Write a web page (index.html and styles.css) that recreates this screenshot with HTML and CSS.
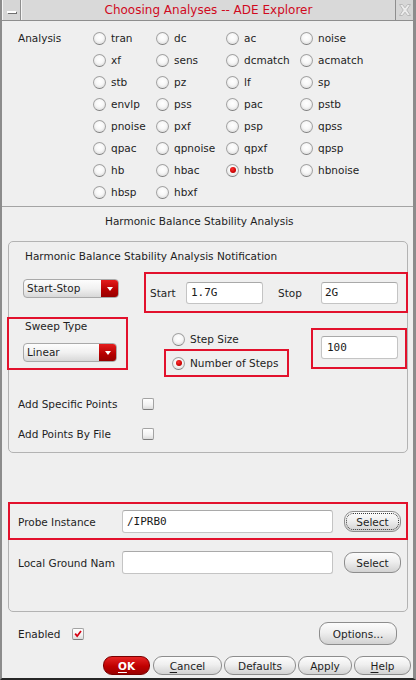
FILE: index.html
```html
<!DOCTYPE html>
<html>
<head>
<meta charset="utf-8">
<title>Choosing Analyses -- ADE Explorer</title>
<link rel="stylesheet" href="styles.css">
</head>
<body>
<div class="window">
  <div class="titlebar">
    <div class="tb-btn tb-min"><span class="min-glyph"></span></div>
    <div class="tb-title">Choosing Analyses -- ADE Explorer</div>
    <div class="tb-btn tb-close">
      <svg width="12" height="12" viewBox="0 0 12 12"><polygon points="0.5,0.5 3.5,0.5 6,3.8 8.5,0.5 11.5,0.5 7.8,6 11.5,11.5 8.5,11.5 6,8.2 3.5,11.5 0.5,11.5 4.2,6" fill="#ececec" stroke="#b9b9b9" stroke-width="1"/></svg>
    </div>
  </div>

  <div class="analysis">
    <div class="an-label">Analysis</div>
    <div class="an-grid">
      <div class="opt"><span class="radio"></span>tran</div>
      <div class="opt"><span class="radio"></span>dc</div>
      <div class="opt"><span class="radio"></span>ac</div>
      <div class="opt"><span class="radio"></span>noise</div>
      <div class="opt"><span class="radio"></span>xf</div>
      <div class="opt"><span class="radio"></span>sens</div>
      <div class="opt"><span class="radio"></span>dcmatch</div>
      <div class="opt"><span class="radio"></span>acmatch</div>
      <div class="opt"><span class="radio"></span>stb</div>
      <div class="opt"><span class="radio"></span>pz</div>
      <div class="opt"><span class="radio"></span>lf</div>
      <div class="opt"><span class="radio"></span>sp</div>
      <div class="opt"><span class="radio"></span>envlp</div>
      <div class="opt"><span class="radio"></span>pss</div>
      <div class="opt"><span class="radio"></span>pac</div>
      <div class="opt"><span class="radio"></span>pstb</div>
      <div class="opt"><span class="radio"></span>pnoise</div>
      <div class="opt"><span class="radio"></span>pxf</div>
      <div class="opt"><span class="radio"></span>psp</div>
      <div class="opt"><span class="radio"></span>qpss</div>
      <div class="opt"><span class="radio"></span>qpac</div>
      <div class="opt"><span class="radio"></span>qpnoise</div>
      <div class="opt"><span class="radio"></span>qpxf</div>
      <div class="opt"><span class="radio"></span>qpsp</div>
      <div class="opt"><span class="radio"></span>hb</div>
      <div class="opt"><span class="radio"></span>hbac</div>
      <div class="opt"><span class="radio on"></span>hbstb</div>
      <div class="opt"><span class="radio"></span>hbnoise</div>
      <div class="opt"><span class="radio"></span>hbsp</div>
      <div class="opt"><span class="radio"></span>hbxf</div>
    </div>
  </div>

  <div class="sep"></div>
  <div class="heading">Harmonic Balance Stability Analysis</div>

  <div class="group group1">
    <div class="g-title">Harmonic Balance Stability Analysis Notification</div>
    <div class="row-range">
      <div class="dropdown dd-range"><span class="dd-text">Start-Stop</span><span class="dd-arrow"></span></div>
      <div class="hl hl-range">
        <span class="lbl-start">Start</span>
        <div class="field f-start">1.7G</div>
        <span class="lbl-stop">Stop</span>
        <div class="field f-stop">2G</div>
      </div>
    </div>
    <div class="row-sweep">
      <div class="hl hl-sweep">
        <div class="sweep-label">Sweep Type</div>
        <div class="dropdown dd-sweep"><span class="dd-text">Linear</span><span class="dd-arrow"></span></div>
      </div>
      <div class="step-col">
        <div class="opt step-size"><span class="radio"></span>Step Size</div>
        <div class="hl hl-nsteps"><div class="opt"><span class="radio on"></span>Number of Steps</div></div>
      </div>
      <div class="hl hl-steps"><div class="field f-steps">100</div></div>
    </div>
    <div class="check-row cr1"><span class="chk-label">Add Specific Points</span><span class="checkbox"></span></div>
    <div class="check-row cr2"><span class="chk-label">Add Points By File</span><span class="checkbox"></span></div>
  </div>

  <div class="group group2">
    <div class="hl probe-row">
      <span class="inst-label">Probe Instance</span>
      <div class="field f-inst">/IPRB0</div>
      <div class="btn btn-select focus">Select</div>
    </div>
    <div class="ground-row">
      <span class="inst-label">Local Ground Nam</span>
      <div class="field f-inst"></div>
      <div class="btn btn-select">Select</div>
    </div>
  </div>

  <div class="enabled-row">
    <span class="en-label">Enabled</span>
    <span class="checkbox checked"><svg width="12" height="12" viewBox="0 0 12 12"><path d="M2.6 5.6 L5 8.6 L9.6 2.4" fill="none" stroke="#d40012" stroke-width="2.1" stroke-linejoin="miter"/></svg></span>
    <div class="btn btn-options">Options...</div>
  </div>

  <div class="button-row">
    <div class="btn b-ok"><u>O</u>K</div>
    <div class="btn b-cancel"><u>C</u>ancel</div>
    <div class="btn b-defaults">Defaults</div>
    <div class="btn b-apply">Apply</div>
    <div class="btn b-help"><u>H</u>elp</div>
  </div>
</div>
</body>
</html>
```

FILE: styles.css
```css
* { box-sizing: border-box; }
html, body { margin: 0; padding: 0; }
body {
  width: 416px;
  height: 680px;
  overflow: hidden;
  background: #efefef;
  font-family: "DejaVu Sans", sans-serif;
  font-size: 10.5px;
  color: #1e1e1e;
}
.window {
  width: 416px;
  height: 680px;
  border-left: 2px solid #8c8c8c;
  border-right: 3px solid #8c8c8c;
  border-bottom: 2px solid #262626;
  background: #efefef;
  display: flex;
  flex-direction: column;
}

/* title bar */
.titlebar {
  flex: none;
  height: 21px;
  display: flex;
  background: #d9d9d9;
  border-bottom: 1px solid #8e8e8e;
}
.tb-btn {
  flex: none;
  width: 19px;
  height: 20px;
  display: flex;
  align-items: center;
  justify-content: center;
  background: #d6d6d6;
}
.tb-min { border-left: 1px solid #f6f6f6; border-right: 1px solid #8e8e8e; }
.tb-close { border-left: 1px solid #8e8e8e; width: 18px; }
.min-glyph {
  width: 9px;
  height: 2px;
  margin-top: 3px;
  background: #ffffff;
  box-shadow: 1px 1px 0 #6f6f6f;
}
.tb-title {
  flex: 1;
  text-align: center;
  color: #d0091e;
  font-size: 12px;
  line-height: 20px;
  border-left: 1px solid #f4f4f4;
}

/* analysis radio grid */
.analysis {
  flex: none;
  height: 185px;
  display: flex;
  padding: 6px 0 0 16px;
}
.an-label {
  width: 75px;
  height: 22px;
  display: flex;
  align-items: center;
}
.an-grid {
  display: grid;
  grid-template-columns: 63px 70px 74px 1fr;
  grid-auto-rows: 22px;
}
.opt {
  display: flex;
  align-items: center;
  gap: 5px;
  white-space: nowrap;
}
.radio {
  flex: none;
  width: 13px;
  height: 13px;
  border-radius: 50%;
  border: 1px solid #a2a2a2;
  border-bottom-color: #7e7e7e;
  background: radial-gradient(circle at 50% 40%, #ffffff 0%, #f7f7f7 45%, #cfcfcf 100%);
  display: flex;
  align-items: center;
  justify-content: center;
}
.radio.on::after {
  content: "";
  width: 6px;
  height: 6px;
  border-radius: 50%;
  background: radial-gradient(circle at 40% 35%, #ff3030, #c80000 65%, #8c0000);
}

.sep {
  flex: none;
  height: 1px;
  background: #a4a4a4;
}
.heading {
  flex: none;
  height: 34px;
  padding: 7px 0 0 103px;
  line-height: 14px;
}

/* group boxes */
.group {
  flex: none;
  margin: 0 5px 0 6px;
  border: 1px solid #b3b3b3;
  border-radius: 5px;
}
.group1 { height: 212px; }
.g-title {
  height: 30px;
  padding: 7px 0 0 16px;
  line-height: 14px;
}

.hl { border: 2px solid #e2112c; }

.row-range {
  height: 41px;
  display: flex;
  align-items: flex-start;
}
.dropdown {
  flex: none;
  display: flex;
  height: 19px;
  border: 1px solid #a9a9a9;
  border-radius: 4px;
  background: linear-gradient(#fdfdfd, #f1f1f1 50%, #d8d8d8);
  overflow: hidden;
}
.dd-text {
  flex: 1;
  padding-left: 3px;
  line-height: 17px;
  white-space: nowrap;
}
.dd-arrow {
  flex: none;
  width: 17px;
  background: linear-gradient(#e41c1c, #b40000 60%, #960000);
  display: flex;
  align-items: center;
  justify-content: center;
}
.dd-arrow::after {
  content: "";
  width: 0;
  height: 0;
  border-left: 3.5px solid transparent;
  border-right: 3.5px solid transparent;
  border-top: 4px solid #ffffff;
}
.dd-range {
  width: 96px;
  margin: 7px 0 0 14px;
}
.hl-range {
  flex: 1;
  height: 41px;
  margin: 0 -1px 0 25px;
  display: flex;
  align-items: center;
  padding-left: 4px;
}
.lbl-start { width: 36px; }
.lbl-stop { width: 43px; margin-left: 15px; }
.field {
  flex: none;
  background: #ffffff;
  border: 1px solid #c4c4c4;
  border-top-color: #a9a9a9;
  border-radius: 3px;
  font-family: "DejaVu Sans Mono", monospace;
  font-size: 11px;
  color: #1a1a1a;
  display: flex;
  align-items: center;
  padding-left: 4px;
}
.f-start { width: 77px; height: 22px; }
.f-stop { width: 77px; height: 22px; padding-left: 3px; }

.row-sweep {
  margin-top: 4px;
  height: 60px;
  display: flex;
  align-items: flex-start;
}
.hl-sweep {
  width: 121px;
  height: 53px;
  margin-left: -2px;
  padding-left: 14px;
}
.sweep-label {
  padding-left: 2px;
  line-height: 14px;
}
.dd-sweep {
  width: 94px;
  margin-top: 10px;
}
.step-col {
  margin-left: 36px;
}
.step-size {
  margin-top: 15px;
  height: 14px;
  padding-left: 8px;
}
.hl-nsteps {
  margin-top: 3px;
  height: 28px;
  width: 125px;
  padding-left: 6px;
  display: flex;
  align-items: center;
}
.hl-steps {
  width: 96px;
  height: 41px;
  margin: 11px -1px 0 22px;
  padding: 6px 0 0 8px;
}
.f-steps { width: 77px; height: 23px; padding-left: 5px; }

.check-row {
  height: 22px;
  display: flex;
  align-items: center;
  padding-left: 9px;
}
.cr1 { margin-top: 16px; }
.cr2 { margin-top: 8px; }
.chk-label { width: 124px; }
.checkbox {
  flex: none;
  width: 12px;
  height: 12px;
  border: 1px solid #a3a3a3;
  border-bottom-color: #7b7b7b;
  border-radius: 2px;
  background: linear-gradient(#ffffff, #f2f2f2 60%, #dcdcdc);
  display: flex;
  align-items: center;
  justify-content: center;
}
.checkbox svg { display: block; }

.group2 {
  height: 110px;
  margin-top: 49px;
}
.probe-row {
  height: 38px;
  margin: -1px -1px 0 -1px;
  display: flex;
  align-items: center;
  padding: 1px 0 0 8px;
}
.inst-label { width: 104px; white-space: nowrap; }
.f-inst { width: 211px; height: 23px; }
.btn {
  flex: none;
  display: flex;
  align-items: center;
  justify-content: center;
  border: 1px solid #8d8d8d;
  border-radius: 9px;
  background: linear-gradient(#fcfcfc, #efefef 45%, #d2d2d2);
  color: #1e1e1e;
  white-space: nowrap;
}
.btn u { text-decoration: underline; text-underline-offset: 2px; }
.btn-select {
  width: 57px;
  height: 21px;
  margin-left: 11px;
}
.btn-select.focus {
  outline: 1px dotted #3a3a3a;
  outline-offset: -3px;
}
.ground-row {
  height: 25px;
  margin-top: 10px;
  display: flex;
  align-items: center;
  padding-left: 9px;
}

.enabled-row {
  flex: none;
  height: 23px;
  margin-top: 10px;
  display: flex;
  align-items: center;
  padding: 0 16px 0 16px;
}
.en-label { width: 54px; }
.btn-options {
  width: 78px;
  height: 23px;
  margin-left: auto;
}

.button-row {
  flex: none;
  height: 19px;
  margin-top: 11px;
  display: flex;
  justify-content: flex-end;
  gap: 2px;
  padding-right: 2px;
}
.button-row .btn { height: 19px; }
.b-ok {
  width: 47px;
  margin-right: 1px;
  background: linear-gradient(#e62424, #bf0000 55%, #9a0000);
  border-color: #7a0000;
  color: #ffffff;
  font-weight: bold;
}
.b-cancel { width: 69px; }
.b-defaults { width: 72px; }
.b-apply { width: 54px; }
.b-help { width: 57px; }
```
